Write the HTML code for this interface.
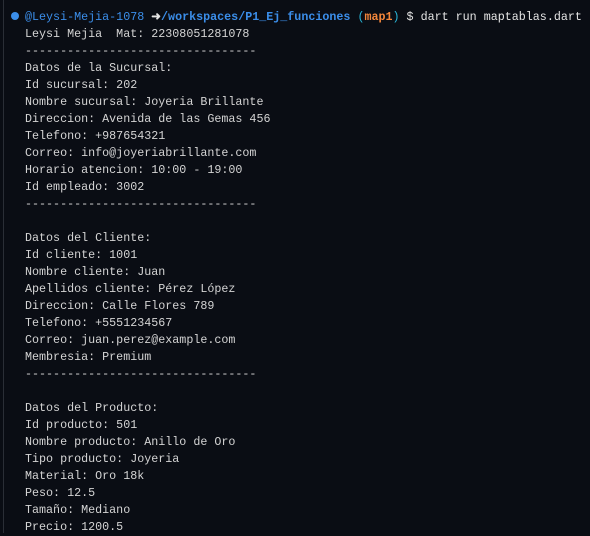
<!DOCTYPE html>
<html><head><meta charset="utf-8"><style>
html,body{margin:0;padding:0;background:#0a0d14;width:590px;height:533px;overflow:hidden}
.bar{position:absolute;left:3px;top:0;width:1px;height:533px;background:#2a2e36}
pre{position:absolute;left:25px;top:9px;margin:0;font-family:"Liberation Mono",monospace;font-size:11.7px;line-height:17px;color:#d4d4d4;white-space:pre}
.dot{position:absolute;left:11px;top:12px;width:8px;height:8px;border-radius:50%;background:#3b8eea}
.b{color:#3b8eea}.bb{color:#3b8eea;font-weight:bold}.c{color:#29b8db}.o{color:#f5873b;font-weight:bold}.w{color:#e5e5e5}
</style></head><body>
<div class="bar"></div><div class="dot"></div>
<pre><span class="b">@Leysi-Mejia-1078 </span><span class="w" style="font-weight:bold">➜</span><span class="bb">/workspaces/P1_Ej_funciones</span> <span class="c">(</span><span class="o">map1</span><span class="c">)</span> <span class="w">$ dart run maptablas.dart</span>
Leysi Mejia  Mat: 22308051281078
---------------------------------
Datos de la Sucursal:
Id sucursal: 202
Nombre sucursal: Joyeria Brillante
Direccion: Avenida de las Gemas 456
Telefono: +987654321
Correo: info@joyeriabrillante.com
Horario atencion: 10:00 - 19:00
Id empleado: 3002
---------------------------------

Datos del Cliente:
Id cliente: 1001
Nombre cliente: Juan
Apellidos cliente: Pérez López
Direccion: Calle Flores 789
Telefono: +5551234567
Correo: juan.perez@example.com
Membresia: Premium
---------------------------------

Datos del Producto:
Id producto: 501
Nombre producto: Anillo de Oro
Tipo producto: Joyeria
Material: Oro 18k
Peso: 12.5
Tamaño: Mediano
Precio: 1200.5</pre>
</body></html>
